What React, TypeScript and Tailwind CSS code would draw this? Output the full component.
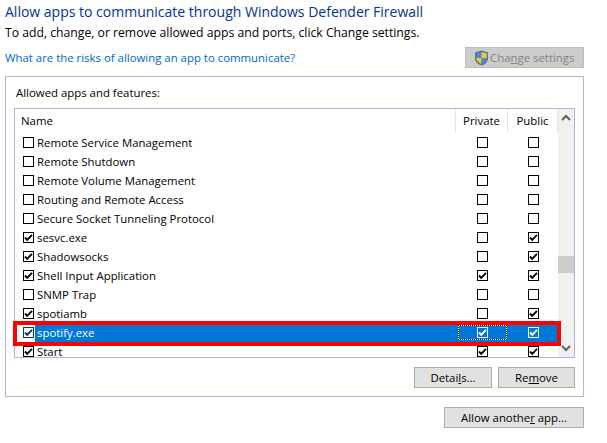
const rows = [
  { name: 'Remote Service Management', on: false, priv: false, pub: false },
  { name: 'Remote Shutdown', on: false, priv: false, pub: false },
  { name: 'Remote Volume Management', on: false, priv: false, pub: false },
  { name: 'Routing and Remote Access', on: false, priv: false, pub: false },
  { name: 'Secure Socket Tunneling Protocol', on: false, priv: false, pub: false },
  { name: 'sesvc.exe', on: true, priv: false, pub: true },
  { name: 'Shadowsocks', on: true, priv: false, pub: true },
  { name: 'Shell Input Application', on: true, priv: true, pub: true },
  { name: 'SNMP Trap', on: false, priv: false, pub: false },
  { name: 'spotiamb', on: true, priv: false, pub: true },
  { name: 'spotify.exe', on: true, priv: true, pub: true, selected: true },
  { name: 'Start', on: true, priv: true, pub: true },
];

function Check({ checked, tone = 'black' }: { checked: boolean; tone?: 'black' | 'white' | 'navy' }) {
  const stroke = tone === 'white' ? '#ffffff' : tone === 'navy' ? '#0b3a63' : '#000000';
  return (
    <span
      className={`flex h-[11px] w-[11px] shrink-0 items-center justify-center border ${
        tone === 'white' ? 'border-white' : tone === 'navy' ? 'border-[#0b3a63] bg-white' : 'border-black bg-white'
      }`}
    >
      {checked && (
        <svg width="9" height="9" viewBox="0 0 9 9">
          <path d="M1 4.5 L3.2 6.8 L8 1.8" fill="none" stroke={stroke} strokeWidth="1.9" />
        </svg>
      )}
    </span>
  );
}

function Shield() {
  return (
    <svg width="15" height="16" viewBox="0 0 15 16" className="shrink-0">
      <path d="M7.5 0.5 L14 2.5 V8 C14 12 11 14.5 7.5 15.5 C4 14.5 1 12 1 8 V2.5 Z" fill="#5f6f80" />
      <path d="M7.5 2 V8 H2.2 V3.4 Z" fill="#3f8fd8" />
      <path d="M7.5 2 L12.8 3.4 V8 H7.5 Z" fill="#f2c04a" />
      <path d="M2.2 8 H7.5 V14 C5 13.2 2.6 11.2 2.2 8 Z" fill="#f2c04a" />
      <path d="M7.5 8 H12.8 C12.4 11.2 10 13.2 7.5 14 Z" fill="#3f8fd8" />
    </svg>
  );
}

function Button({ children, className }: { children: React.ReactNode; className: string }) {
  return (
    <button className={`flex h-[21px] items-center justify-center border border-[#adadad] bg-[#e1e1e1] text-black ${className}`}>
      {children}
    </button>
  );
}

export default function App() {
  return (
    <div className="h-[443px] w-[607px] overflow-hidden bg-white pl-[5px] pr-[23px] pt-[1px] font-['Open_Sans',sans-serif] text-[11.4px] leading-[16px] text-black">
      <h1 className="h-[21px] text-[14px] leading-[21px] font-normal text-[#003399]">
        Allow apps to communicate through Windows Defender Firewall
      </h1>
      <p className="mt-[3px] h-[16px] text-[12.2px]">
        To add, change, or remove allowed apps and ports, click Change settings.
      </p>

      <div className="mt-[6px] flex h-[21px] items-start justify-between">
        <a className="mt-[3px] text-[#0066cc]">What are the risks of allowing an app to communicate?</a>
        <button className="flex h-[21px] w-[119px] items-center gap-[1px] border border-[#bfbfbf] bg-[#cccccc] pl-[8px] text-[#838383]">
          <Shield />
          <span>
            Cha<span className="underline">n</span>ge settings
          </span>
        </button>
      </div>

      {/* Group box */}
      <div className="mt-[8px] h-[321px] border border-[#b4b4d8] px-[8px] pt-[8px]">
        <div className="h-[16px] pl-[2px]">Allowed apps and features:</div>

        <div className="relative mt-[7px] h-[250px] border border-[#b4b4d8]">
          <div className="flex h-full">
            <div className="min-w-0 flex-1">
              {/* Header */}
              <div className="flex h-[24px] items-start">
                <div className="flex h-full flex-1 items-center border-r border-[#e5e5e5] pl-[6px]">Name</div>
                <div className="flex h-full w-[52px] items-center justify-center border-r border-[#e5e5e5]">Private</div>
                <div className="flex h-full w-[50px] items-center justify-center border-r border-[#e5e5e5]">Public</div>
              </div>

              {rows.map((r) => (
                <div key={r.name} className="flex h-[19px] items-center">
                  <div className="flex h-full flex-1 items-center gap-[1px] pl-[8px]">
                    <Check checked={r.on} tone={r.selected ? 'navy' : 'black'} />
                    <span className={r.selected ? 'flex h-full flex-1 items-center bg-[#0078d7] pl-[2px] text-white' : 'pl-[2px]'}>
                      {r.name}
                    </span>
                  </div>
                  <div className={`flex h-full w-[52px] items-center justify-center ${r.selected ? 'bg-[#0078d7]' : ''}`}>
                    {r.selected ? (
                      <div className="h-[15px] w-[49px] border border-dotted border-black bg-white">
                        <div className="flex h-full w-full items-center justify-center bg-[#0078d7]">
                          <Check checked={r.priv} tone="white" />
                        </div>
                      </div>
                    ) : (
                      <Check checked={r.priv} />
                    )}
                  </div>
                  <div className={`flex h-full w-[50px] items-center justify-center ${r.selected ? 'bg-[#0078d7]' : ''}`}>
                    <Check checked={r.pub} tone={r.selected ? 'white' : 'black'} />
                  </div>
                </div>
              ))}
            </div>

            {/* Scrollbar */}
            <div className="flex w-[16px] shrink-0 flex-col items-center bg-[#f0f0f0]">
              <svg width="10" height="8" viewBox="0 0 10 8" className="mt-[5px]">
                <path d="M1 6 L5 2 L9 6" fill="none" stroke="#606060" strokeWidth="2" />
              </svg>
              <div className="mt-[134px] h-[17px] w-full bg-[#cdcdcd]" />
              <svg width="10" height="8" viewBox="0 0 10 8" className="mt-auto mb-[5px]">
                <path d="M1 2 L5 6 L9 2" fill="none" stroke="#606060" strokeWidth="2" />
              </svg>
            </div>
          </div>

          {/* Red annotation */}
          <div className="pointer-events-none absolute left-[-2px] top-[212px] h-[25px] w-[548px] border-4 border-[#ff0000]" />
        </div>

        <div className="mt-[9px] flex justify-end gap-[6px]">
          <Button className="w-[78px]">
            <span>
              Detai<span className="underline">l</span>s...
            </span>
          </Button>
          <Button className="w-[77px]">
            <span>
              Re<span className="underline">m</span>ove
            </span>
          </Button>
        </div>
      </div>

      <div className="mt-[10px] flex justify-end">
        <Button className="w-[140px]">
          <span>
            Allow anothe<span className="underline">r</span> app...
          </span>
        </Button>
      </div>
    </div>
  );
}
